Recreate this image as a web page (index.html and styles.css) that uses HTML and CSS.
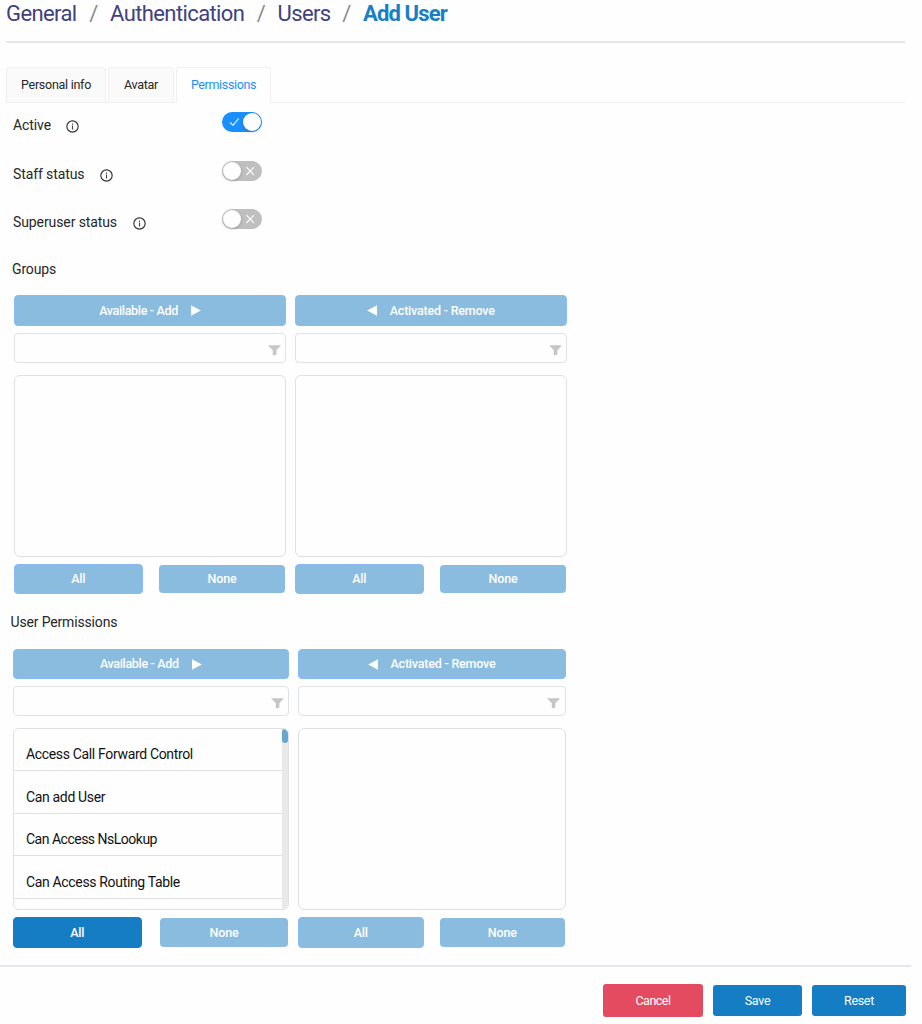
FILE: index.html
```html
<!DOCTYPE html>
<html lang="en">
<head>
<meta charset="utf-8">
<title>Add User</title>
<link rel="stylesheet" href="styles.css">
</head>
<body>
<svg class="defs" width="0" height="0">
  <symbol id="info" viewBox="0 0 14 14"><circle cx="7" cy="7" r="6.1" fill="none" stroke="#333" stroke-width="1.25"/><path d="M7 6v4.2M7 3.8v1.2" stroke="#444" stroke-width="1.2"/></symbol>
  <symbol id="funnel" viewBox="0 0 13 11"><path d="M0 .3h13L8.4 5.2v4.3L4.8 10.6V5.2z" fill="#c6c6c6"/></symbol>
  <symbol id="right" viewBox="0 0 10 11"><path d="M0 .2 9.8 5.5 0 10.8z" fill="#fff"/></symbol>
  <symbol id="left" viewBox="0 0 10 11"><path d="M10 .2.2 5.5 10 10.8z" fill="#fff"/></symbol>
</svg>
<nav class="crumbs"><span class="c1">General</span><i>/</i><span class="c2">Authentication</span><i>/</i><span class="c3">Users</span><i>/</i><strong>Add User</strong></nav>
<div class="tabs"><div class="tab t1">Personal info</div><div class="tab t2">Avatar</div><div class="tab t3 active">Permissions</div></div>
<section class="flags">
  <div class="flag"><label>Active</label><svg class="info"><use href="#info"/></svg><span class="switch on"><svg viewBox="0 0 40 20"><path d="m8 10.3 3 3 5.7-6.8" /></svg><b></b></span></div>
  <div class="flag"><label>Staff status</label><svg class="info"><use href="#info"/></svg><span class="switch"><svg viewBox="0 0 40 20"><path d="m24.5 6.2 7.4 7.8m0-7.8-7.4 7.8"/></svg><b></b></span></div>
  <div class="flag"><label>Superuser status</label><svg class="info"><use href="#info"/></svg><span class="switch"><svg viewBox="0 0 40 20"><path d="m24.5 6.2 7.4 7.8m0-7.8-7.4 7.8"/></svg><b></b></span></div>
</section>
<h2 class="groups-title">Groups</h2>
<section class="transfer groups">
  <div class="column">
    <button class="btn move"><span class="add">Available - Add</span><svg class="arrow"><use href="#right"/></svg></button>
    <div class="filter"><svg><use href="#funnel"/></svg></div>
    <div class="list"></div>
    <div class="picks"><button class="btn all">All</button><button class="btn none">None</button></div>
  </div>
  <div class="column">
    <button class="btn move"><svg class="arrow"><use href="#left"/></svg><span class="remove">Activated - Remove</span></button>
    <div class="filter"><svg><use href="#funnel"/></svg></div>
    <div class="list"></div>
    <div class="picks"><button class="btn all">All</button><button class="btn none">None</button></div>
  </div>
</section>
<h2 class="perms-title">User Permissions</h2>
<section class="transfer perms">
  <div class="column">
    <button class="btn move"><span class="add">Available - Add</span><svg class="arrow"><use href="#right"/></svg></button>
    <div class="filter"><svg><use href="#funnel"/></svg></div>
    <div class="list filled">
      <ul><li>Access Call Forward Control</li><li>Can add User</li><li class="tight">Can Access NsLookup</li><li>Can Access Routing Table</li></ul>
      <div class="track"><div class="thumb"></div></div>
    </div>
    <div class="picks"><button class="btn all solid">All</button><button class="btn none">None</button></div>
  </div>
  <div class="column">
    <button class="btn move"><svg class="arrow"><use href="#left"/></svg><span class="remove">Activated - Remove</span></button>
    <div class="filter"><svg><use href="#funnel"/></svg></div>
    <div class="list"></div>
    <div class="picks"><button class="btn all">All</button><button class="btn none">None</button></div>
  </div>
</section>
<footer><button class="cancel">Cancel</button><button class="save">Save</button><button class="reset">Reset</button></footer>
</body>
</html>
```
FILE: styles.css
```css
* { box-sizing: border-box; }
body { margin: 0; height: 1024px; overflow: hidden; background: #fefefe; color: #262626; font: 14px/20px Roboto, "Noto Sans", sans-serif; }
svg { display: block; flex: none; }
.defs { position: absolute; }
button { display: block; margin: 0; padding: 0; border: 0; font: inherit; color: #fff; letter-spacing: inherit; }
h2 { margin: 0; font-size: 14px; line-height: 20px; font-weight: 400; letter-spacing: -.16px; }

.crumbs { display: flex; height: 43px; margin: 0 17px 0 6px; border-bottom: 2px solid #e4e5ec; color: #414180; font-size: 22px; line-height: 28px; white-space: nowrap; letter-spacing: -.6px; }
.crumbs i { font-style: normal; color: #8b8b8b; width: 33px; text-align: center; }
.crumbs span, .crumbs strong { flex: none; }
.crumbs strong { color: #167fc5; letter-spacing: -.85px; }
.c1 { width: 71px; } .c2 { width: 134.5px; } .c3 { width: 52.5px; }

.tabs { display: flex; gap: 2px; height: 36px; margin: 24px 17px 0 6px; border-bottom: 1px solid #f0f0f0; }
.tab { height: 36px; border: 1px solid #f0f0f0; border-radius: 3px 3px 0 0; background: #fafafa; font-size: 12.5px; line-height: 34px; text-align: center; white-space: nowrap; letter-spacing: -.27px; }
.t1 { width: 100px; } .t2 { width: 66px; } .t3 { width: 95px; }
.tab.active { background: #fefefe; border-bottom-color: #fefefe; color: #1890ff; letter-spacing: -.35px; }

.flags { padding: 9px 0 0 13px; }
.flag { display: flex; height: 48.7px; width: 249px; white-space: nowrap; }
.flag label { margin-top: 3px; letter-spacing: -.1px; }
.info { width: 13px; height: 13px; margin: 8px 0 0 15.5px; }
.switch { position: relative; width: 40px; height: 20px; margin-left: auto; border-radius: 10px; background: #bfbfbf; }
.switch.on { background: #1890ff; }
.switch path { fill: none; stroke: #fff; stroke-width: 1.1; }
.switch b { position: absolute; left: 1px; top: 1px; width: 18px; height: 18px; border-radius: 9px; background: #fff; box-shadow: 0 1px 3px rgba(0, 35, 11, .25); }
.switch.on b { left: 21px; }

.groups-title { margin: 1px 0 0 12px; height: 36px; }
.perms-title { margin: 18px 0 0 10.5px; height: 37px; }
.transfer { display: flex; }
.groups { padding-left: 14px; gap: 9px; }
.groups .column { width: 272px; }
.perms { padding-left: 12.5px; gap: 9px; }
.perms .column { width: 276.5px; }
.perms .column + .column { width: 267.5px; }
.btn { background: #8abce0; border-radius: 4px; font-size: 12.5px; font-weight: 500; }
.move { display: flex; align-items: center; justify-content: center; width: 100%; height: 31px; border: 1px solid #8ab9f5; }
.perms .move { height: 30px; }
.arrow { width: 10px; height: 11px; }
.add { margin-right: 13px; letter-spacing: -.33px; }
.remove { margin-left: 12.5px; letter-spacing: -.2px; }
.filter { height: 30px; margin-top: 7px; border: 1px solid #dfe3e6; border-radius: 4px; display: flex; justify-content: flex-end; padding: 11px 4.5px 0 0; }
.filter svg { width: 13px; height: 11px; }
.list { height: 182px; margin-top: 12px; border: 1px solid #e1e1e1; border-radius: 6px; overflow: hidden; }
.picks { display: flex; justify-content: space-between; align-items: center; margin-top: 7px; height: 30px; letter-spacing: -.2px; }
.all { width: 128.5px; height: 30px; border: 1px solid #8ab9f5; }
.none { width: 126px; height: 28px; margin-right: 1px; }
.perms .picks { height: 31px; }
.perms .all { width: 129.5px; height: 31px; }
.perms .none { width: 128px; height: 29px; }
.perms .column + .column .all { width: 125.5px; }
.perms .column + .column .none { width: 124.5px; }
.btn.solid { background: #147dc4; border-color: #1677dc; }
.filled { display: flex; justify-content: space-between; color: #111; }
.filled ul { flex: 1; margin: 0; padding: 0; list-style: none; }
.filled li { height: 42.6px; padding: 15.5px 0 0 12.5px; border-bottom: 1px solid #e0e0e0; white-space: nowrap; line-height: 20px; letter-spacing: -.34px; }
.filled li:first-child { height: 42px; padding-top: 15px; }
.filled .tight { letter-spacing: -.5px; }
.track { width: 6.5px; background: #e9e9e9; }
.thumb { width: 6px; height: 14px; border-radius: 3px; background: #65a7d3; }

footer { display: flex; width: 911px; height: 59px; margin-top: 17px; padding: 17px 5px 0 0; border-top: 2px solid #e6e7ed; justify-content: flex-end; gap: 10px; font-size: 12.5px; letter-spacing: -.3px; }
footer button { height: 31px; margin-top: 1px; border-radius: 3px; background: #147dc4; }
footer .cancel { width: 100px; height: 33px; margin-top: 0; background: #e54b60; letter-spacing: -.5px; }
.save { width: 89px; } .reset { width: 94px; }
```
